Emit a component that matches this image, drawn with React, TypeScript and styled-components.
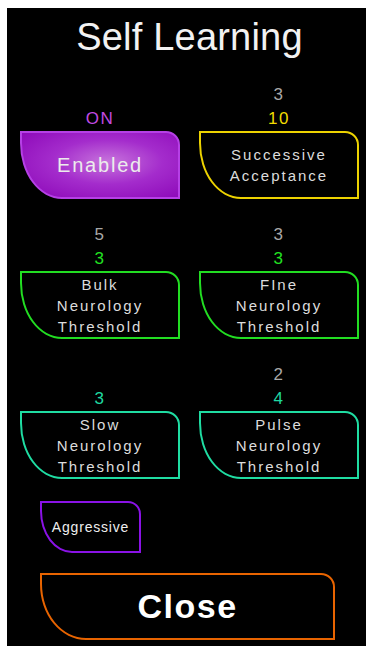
import React from "react";
import styled, { createGlobalStyle } from "styled-components";

const GlobalStyle = createGlobalStyle`
  html, body {
    margin: 0;
    padding: 0;
    background: #ffffff;
  }
  body {
    font-family: "Liberation Sans", Arial, sans-serif;
  }
`;

const Panel = styled.div`
  margin: 8px 0 0 7px;
  width: 359px;
  height: 638px;
  background: #000;
  box-sizing: border-box;
  padding: 0 7px 0 13px;
  display: flex;
  flex-direction: column;
`;

const Title = styled.h1`
  margin: 0;
  height: 60px;
  line-height: 58px;
  text-align: center;
  font-size: 38px;
  font-weight: 400;
  color: #f2f2f2;
  letter-spacing: 0.2px;
`;

const Grid = styled.div`
  margin-top: 15px;
  display: grid;
  grid-template-columns: 160px 160px;
  column-gap: 19px;
  row-gap: 24px;
`;

const Cell = styled.div`
  display: flex;
  flex-direction: column;
  align-items: stretch;
`;

const Label = styled.div<{ $color: string }>`
  height: 24px;
  line-height: 24px;
  text-align: center;
  font-size: 17px;
  letter-spacing: 1.5px;
  color: ${(p) => p.$color};
`;

const ShapeButton = styled.button<{ $color: string; $filled?: boolean }>`
  box-sizing: border-box;
  width: 100%;
  height: 68px;
  padding: 0;
  border: 2px solid ${(p) => p.$color};
  border-radius: 0 14px 0 0 / 0 14px 0 0;
  border-bottom-left-radius: 42px 56px;
  background: ${(p) =>
    p.$filled
      ? "radial-gradient(ellipse at 55% 45%, #c774dc 0%, #a42ccc 45%, #8a04b6 100%)"
      : "#000"};
  color: ${(p) => (p.$filled ? "#ececec" : "#dcdcdc")};
  font-family: "Liberation Sans", Arial, sans-serif;
  font-size: ${(p) => (p.$filled ? "20px" : "15px")};
  letter-spacing: ${(p) => (p.$filled ? "1.8px" : "2px")};
  line-height: 21px;
  text-align: center;
  display: flex;
  align-items: center;
  justify-content: center;
  white-space: pre-line;
  cursor: pointer;
`;

const Bottom = styled.div`
  margin-top: 22px;
  padding-left: 20px;
  display: flex;
  flex-direction: column;
  align-items: flex-start;
  gap: 20px;
`;

const SmallButton = styled(ShapeButton)`
  width: 101px;
  height: 52px;
  font-size: 14px;
  letter-spacing: 0.8px;
  border-top-right-radius: 13px;
  border-bottom-left-radius: 32px 42px;
  color: #eeeeee;
`;

const CloseButton = styled(ShapeButton)`
  width: 295px;
  height: 67px;
  font-size: 34px;
  font-weight: 700;
  letter-spacing: 1.5px;
  color: #ffffff;
  border-bottom-left-radius: 46px 56px;
  border-top-right-radius: 14px;
`;

type Item = {
  top?: string;
  value: string;
  valueColor: string;
  border: string;
  text: string;
  filled?: boolean;
};

const items: Item[] = [
  { value: "ON", valueColor: "#c24ae0", border: "#b640e6", text: "Enabled", filled: true },
  { top: "3", value: "10", valueColor: "#f2dc00", border: "#ecd200", text: "Successive\nAcceptance" },
  { top: "5", value: "3", valueColor: "#22e022", border: "#22dd22", text: "Bulk\nNeurology\nThreshold" },
  { top: "3", value: "3", valueColor: "#22e022", border: "#22dd22", text: "FIne\nNeurology\nThreshold" },
  { value: "3", valueColor: "#1fd8a0", border: "#1fdca2", text: "Slow\nNeurology\nThreshold" },
  { top: "2", value: "4", valueColor: "#1fd8a0", border: "#1fdca2", text: "Pulse\nNeurology\nThreshold" },
];

export default function App() {
  return (
    <>
      <GlobalStyle />
      <Panel>
        <Title>Self Learning</Title>
        <Grid>
          {items.map((it, i) => (
            <Cell key={i}>
              <Label $color="#a8a8a8">{it.top ?? ""}</Label>
              <Label $color={it.valueColor}>{it.value}</Label>
              <ShapeButton $color={it.border} $filled={it.filled}>
                {it.text}
              </ShapeButton>
            </Cell>
          ))}
        </Grid>
        <Bottom>
          <SmallButton $color="#8a12e6">Aggressive</SmallButton>
          <CloseButton $color="#e86400">Close</CloseButton>
        </Bottom>
      </Panel>
    </>
  );
}
